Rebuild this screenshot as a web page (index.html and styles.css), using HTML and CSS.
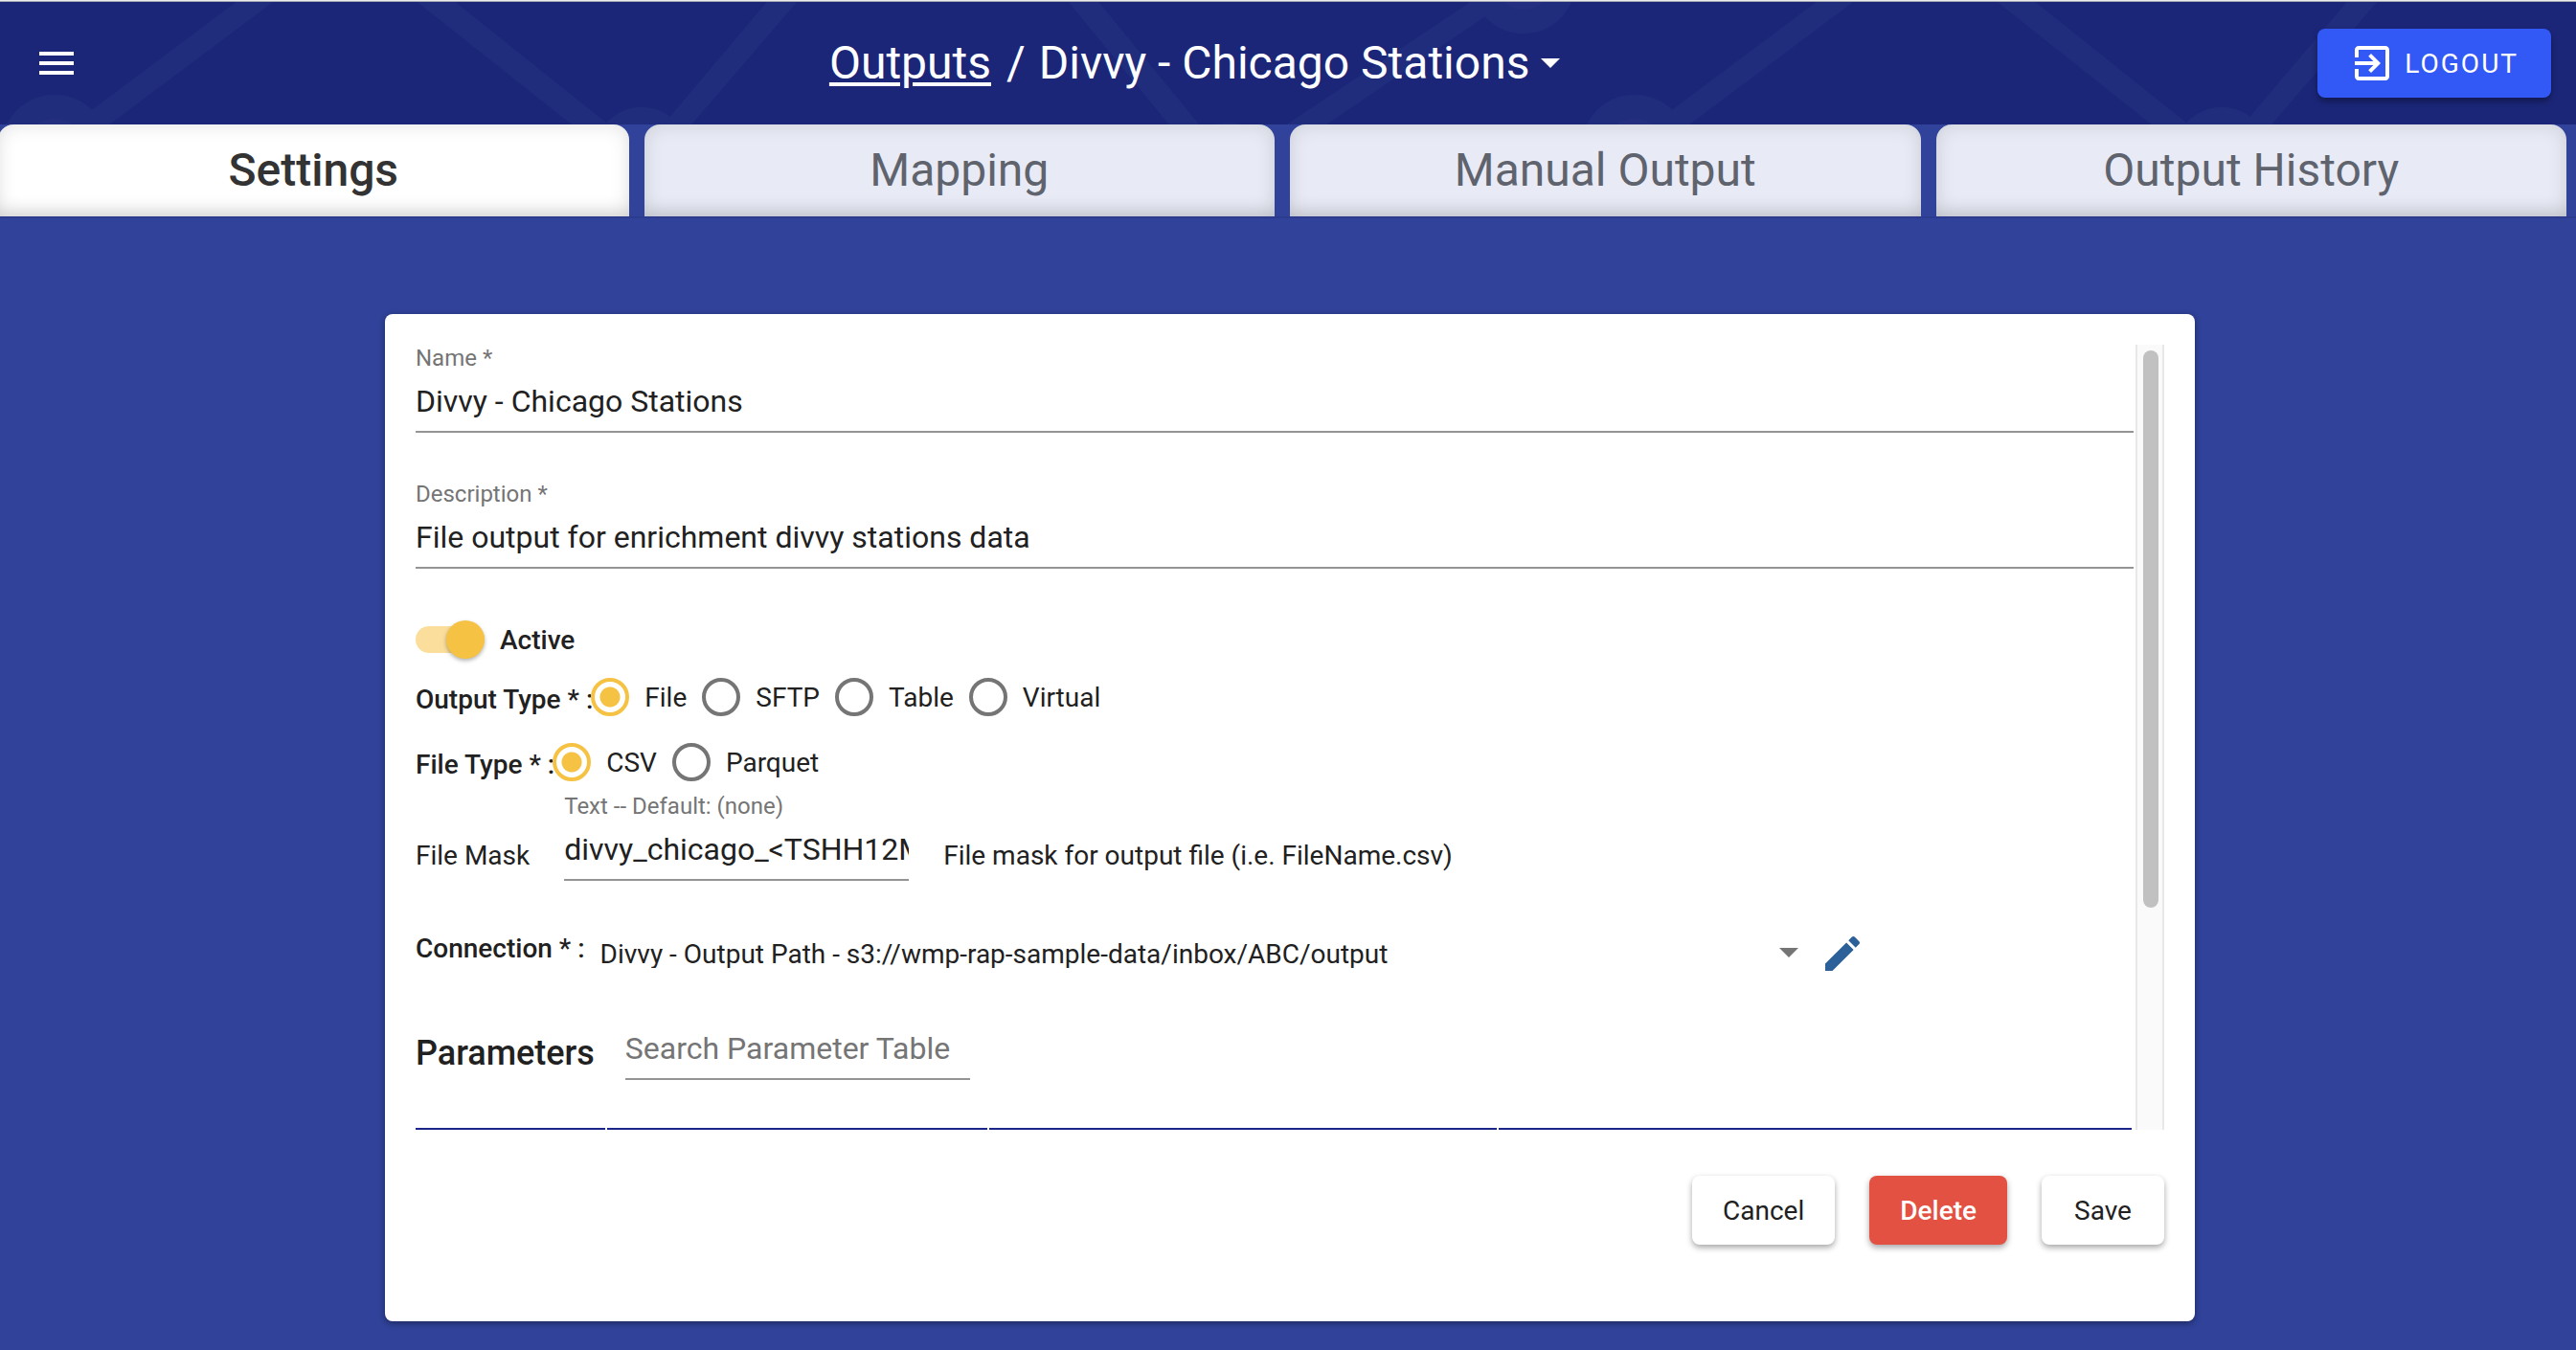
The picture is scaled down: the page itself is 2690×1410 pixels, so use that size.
FILE: index.html
```html
<!DOCTYPE html>
<html lang="en">
<head>
<meta charset="utf-8">
<meta name="viewport" content="width=device-width, initial-scale=1">
<title>Outputs / Divvy - Chicago Stations</title>
<link rel="stylesheet" href="styles.css">
</head>
<body>
<header class="topbar">
  <svg class="topbar-pattern" aria-hidden="true">
    <defs>
      <pattern id="network" width="1650" height="128" patternUnits="userSpaceOnUse">
        <g fill="#202c7c">
          <path d="M247 0h38L114 128H76zM436 0h39l160 128h-38zM801 0h31L722 128h-29zM1116 0h31l105 128h-31zM1536 0h37L1385 128h-41z"/>
          <circle cx="57" cy="153" r="56"/>
          <circle cx="670" cy="159" r="49"/>
          <circle cx="1283" cy="176" r="50"/>
          <circle cx="1591" cy="-21" r="54"/>
        </g>
        <g fill="#242f7f">
          <circle cx="57" cy="153" r="31"/>
          <circle cx="1591" cy="-21" r="29"/>
        </g>
      </pattern>
    </defs>
    <rect width="100%" height="100%" fill="url(#network)"/>
  </svg>
  <button class="icon-button" type="button" aria-label="Menu">
    <svg viewBox="0 0 24 24" width="48" height="48" fill="currentColor"><path d="M3 18h18v-2H3v2zm0-5h18v-2H3v2zm0-7v2h18V6H3z"/></svg>
  </button>
  <h1 class="breadcrumb">
    <a href="#outputs">Outputs</a>
    <span class="slash">/</span>
    <span>Divvy - Chicago Stations</span>
    <svg class="caret" viewBox="0 0 20 10" width="20" height="10" fill="currentColor" aria-hidden="true"><path d="M0 0h20L10 10z"/></svg>
  </h1>
  <button class="logout" type="button">
    <svg viewBox="0 0 18 18" width="36" height="36" fill="currentColor" aria-hidden="true"><path d="M7.100 12.600 8.500 14l5-5-5-5-1.400 1.400L9.700 8H0v2h9.700zM16 0H2C.900 0 0 .900 0 2v4h2V2h14v14H2v-4H0v4c0 1.100.900 2 2 2h14c1.100 0 2-.900 2-2V2c0-1.100-.900-2-2-2z"/></svg>
    LOGOUT
  </button>
</header>

<nav class="tabs">
  <a class="tab tab-active" href="#settings" aria-current="page">Settings</a>
  <a class="tab" href="#mapping">Mapping</a>
  <a class="tab" href="#manual-output">Manual Output</a>
  <a class="tab" href="#output-history">Output History</a>
</nav>

<main class="content">
  <form class="card">
    <div class="scroll-area">
      <div class="fields">
        <div class="field">
          <label for="name">Name *</label>
          <input class="text-input" id="name" type="text" value="Divvy - Chicago Stations">
        </div>
        <div class="field">
          <label for="description">Description *</label>
          <input class="text-input" id="description" type="text" value="File output for enrichment divvy stations data">
        </div>

        <label class="toggle-row">
          <input class="toggle" type="checkbox" checked>
          Active
        </label>

        <div class="radio-row output-type" role="radiogroup" aria-labelledby="output-type-label">
          <span class="group-label" id="output-type-label">Output Type * :</span>
          <label class="radio"><input type="radio" name="output-type" checked>File</label>
          <label class="radio"><input type="radio" name="output-type">SFTP</label>
          <label class="radio"><input type="radio" name="output-type">Table</label>
          <label class="radio"><input type="radio" name="output-type">Virtual</label>
        </div>
        <div class="radio-row file-type" role="radiogroup" aria-labelledby="file-type-label">
          <span class="group-label" id="file-type-label">File Type * :</span>
          <label class="radio"><input type="radio" name="file-type" checked>CSV</label>
          <label class="radio"><input type="radio" name="file-type">Parquet</label>
        </div>

        <div class="mask-row">
          <span class="mask-text">File Mask</span>
          <div class="field field-short">
            <label for="file-mask">Text -- Default: (none)</label>
            <input class="text-input" id="file-mask" type="text" value="divvy_chicago_&lt;TSHH12MISS&gt;.csv">
          </div>
          <span class="mask-text">File mask for output file (i.e. FileName.csv)</span>
        </div>

        <div class="connection-row">
          <label class="connection-label" for="connection">Connection * :</label>
          <div class="select-box">
            <select id="connection">
              <option>Divvy - Output Path - s3://wmp-rap-sample-data/inbox/ABC/output</option>
            </select>
            <svg class="select-caret" viewBox="0 0 20 10" width="20" height="10" fill="#757575" aria-hidden="true"><path d="M0 0h20L10 10z"/></svg>
          </div>
          <button class="icon-button edit" type="button" aria-label="Edit connection">
            <svg viewBox="0 0 24 24" width="48" height="48" fill="currentColor"><path d="M3 17.250V21h3.750L17.810 9.940l-3.750-3.750L3 17.250zM20.710 7.040c.390-.390.390-1.020 0-1.410l-2.340-2.340c-.390-.390-1.020-.390-1.410 0l-1.830 1.830 3.750 3.750 1.830-1.830z"/></svg>
          </button>
        </div>

        <div class="parameters-row">
          <h2>Parameters</h2>
          <input class="text-input search" type="text" placeholder="Search Parameter Table" aria-label="Search Parameter Table">
        </div>
        <table class="parameters">
          <colgroup><col class="col-a"><col class="col-b"><col class="col-c"><col class="col-d"></colgroup>
          <thead><tr><th></th><th></th><th></th><th></th></tr></thead>
        </table>
      </div>
      <div class="scrollbar" aria-hidden="true"><div class="scroll-thumb"></div></div>
    </div>
    <div class="actions">
      <button class="button" type="button">Cancel</button>
      <button class="button button-danger" type="button">Delete</button>
      <button class="button" type="submit">Save</button>
    </div>
  </form>
</main>
</body>
</html>
```
FILE: styles.css
```css
* {
  box-sizing: border-box;
}

body {
  margin: 0;
  height: 100vh;
  display: flex;
  flex-direction: column;
  overflow: hidden;
  border-top: 1px solid #ececec;
  background: #304299;
  color: #212121;
  font-family: Roboto, "Liberation Sans", sans-serif;
  font-size: 28px;
  line-height: 29px;
}

button,
input,
select {
  font: inherit;
  color: inherit;
  margin: 0;
}

button {
  cursor: pointer;
}

/* Top bar */

.topbar {
  position: relative;
  flex: none;
  display: flex;
  align-items: center;
  height: 129px;
  padding: 0 26px 0 35px;
  border-top: 1px solid #a9acb4;
  background: #1b2679;
  color: #fff;
}

.topbar-pattern {
  position: absolute;
  inset: 0;
  width: 100%;
  height: 100%;
}

.icon-button {
  position: relative;
  display: flex;
  padding: 0;
  border: 0;
  background: none;
}

.breadcrumb {
  position: relative;
  flex: 1;
  display: flex;
  align-items: center;
  justify-content: center;
  margin: 0;
  padding-right: 8px;
  font-size: 48px;
  line-height: 56px;
  font-weight: 400;
}

.breadcrumb a {
  color: inherit;
  text-decoration-thickness: 4px;
  text-underline-offset: 4px;
}

.slash {
  margin: 0 14px 0 16px;
}

.caret {
  margin-left: 12px;
}

.logout {
  position: relative;
  display: flex;
  align-items: center;
  gap: 16px;
  height: 72px;
  padding: 0 34px 0 39px;
  border: 0;
  border-radius: 8px;
  background: #3259f6;
  color: #fff;
  letter-spacing: 2px;
  box-shadow: 0 4px 6px rgba(0, 0, 0, .35);
}

/* Tabs */

.tabs {
  flex: none;
  display: grid;
  grid-template-columns: repeat(4, 1fr);
  gap: 16px;
  margin-left: -2px;
  padding-right: 10px;
  border-bottom: 2px solid #2c3b8d;
}

.tab {
  height: 96px;
  border-radius: 16px 16px 0 0;
  background: #e8ebf5;
  box-shadow: inset 0 0 20px rgba(0, 0, 0, .12), inset 0 -16px 20px -12px rgba(0, 0, 0, .12);
  color: #5f636e;
  font-size: 48px;
  line-height: 96px;
  text-align: center;
  text-decoration: none;
}

.tab-active {
  background: #fff;
  color: #333;
  font-weight: 500;
}

/* Card */

.content {
  flex: 1;
  min-height: 0;
  display: flex;
  justify-content: center;
  padding: 100px 0 30px 4px;
}

.card {
  flex: 1;
  max-width: 1890px;
  display: flex;
  flex-direction: column;
  padding: 32px 32px 80px;
  border-radius: 8px;
  background: #fff;
  box-shadow: 0 2px 6px rgba(0, 0, 0, .4);
}

.scroll-area {
  flex: 1;
  min-height: 0;
  display: flex;
  gap: 2px;
  overflow: hidden;
}

.fields {
  flex: 1;
  min-width: 0;
}

.scrollbar {
  width: 30px;
  padding: 6px;
  border: solid #e8e8e8;
  border-width: 0 2px;
  background: #fafafa;
}

.scroll-thumb {
  width: 16px;
  height: 72%;
  border-radius: 8px;
  background: #c1c1c1;
}

/* Fields */

.field {
  display: flex;
  flex-direction: column;
  gap: 12px;
  margin-bottom: 50px;
}

.field label {
  font-size: 24px;
  line-height: 28px;
  color: #757575;
}

.text-input {
  display: block;
  width: 100%;
  height: 52px;
  padding: 0 0 12px;
  border: 0;
  border-bottom: 2px solid #949494;
  border-radius: 0;
  background: none;
  font-size: 32px;
  line-height: 38px;
  outline: none;
  appearance: none;
}

.text-input::placeholder {
  color: #757575;
  opacity: 1;
}

.field-short {
  width: 360px;
  margin: 0;
}

.toggle-row {
  display: flex;
  align-items: center;
  gap: 16px;
  width: max-content;
  margin-top: 54px;
  font-weight: 500;
}

.toggle {
  appearance: none;
  display: flex;
  align-items: center;
  justify-content: flex-end;
  width: 72px;
  height: 28px;
  margin: 6px 0;
  border-radius: 14px;
  background: #fbde9c;
}

.toggle::before {
  content: "";
  width: 40px;
  height: 40px;
  flex: none;
  border-radius: 50%;
  background: #f6c244;
  box-shadow: 0 2px 4px rgba(0, 0, 0, .3);
}

.radio-row {
  display: flex;
  align-items: center;
  gap: 16px;
}

.output-type {
  margin-top: 20px;
}

.file-type {
  margin-top: 28px;
}

.group-label {
  margin-right: -18px;
  padding-top: 4px;
  font-weight: 500;
}

.radio {
  display: flex;
  align-items: center;
  gap: 16px;
}

.radio input {
  appearance: none;
  width: 40px;
  height: 40px;
  border: 4px solid #757575;
  border-radius: 50%;
}

.radio input:checked {
  border-color: #f6c244;
  background: radial-gradient(circle, #f6c244 10px, transparent 11px);
}

.mask-row {
  display: flex;
  align-items: flex-end;
  gap: 36px;
  margin-top: 12px;
}

.mask-text {
  margin-bottom: 12px;
}

.connection-row {
  display: flex;
  align-items: center;
  gap: 16px;
  margin-top: 52px;
}

.connection-label {
  padding-bottom: 12px;
  font-weight: 500;
}

.select-box {
  position: relative;
  width: 70%;
}

.select-box select {
  appearance: none;
  width: 100%;
  height: 48px;
  padding: 0;
  border: 0;
  background: none;
}

.select-caret {
  position: absolute;
  top: 18px;
  right: 4px;
}

.edit {
  margin-left: 2px;
  color: #2b6098;
}

.parameters-row {
  display: flex;
  gap: 32px;
  margin-top: 56px;
}

.parameters-row h2 {
  margin: 0;
  font-size: 36px;
  line-height: 48px;
  font-weight: 500;
}

.search {
  width: 360px;
}

.parameters {
  width: calc(100% + 2px);
  margin-left: -2px;
  table-layout: fixed;
  border-collapse: separate;
  border-spacing: 2px 0;
}

.parameters th {
  height: 52px;
  padding: 0;
  border-bottom: 2px solid #1b2688;
}

.col-a {
  width: 11.1%;
}

.col-b {
  width: 22.2%;
}

.col-c {
  width: 29.7%;
}

.col-d {
  width: 37%;
}

/* Actions */

.actions {
  display: flex;
  justify-content: flex-end;
  gap: 36px;
  margin-top: 48px;
}

.button {
  min-width: 128px;
  height: 72px;
  padding: 0 32px;
  border: 0;
  border-radius: 8px;
  background: #fff;
  box-shadow: 0 3px 6px rgba(0, 0, 0, .35);
}

.button-danger {
  background: #e25142;
  color: #fff;
  font-weight: 500;
}
```
